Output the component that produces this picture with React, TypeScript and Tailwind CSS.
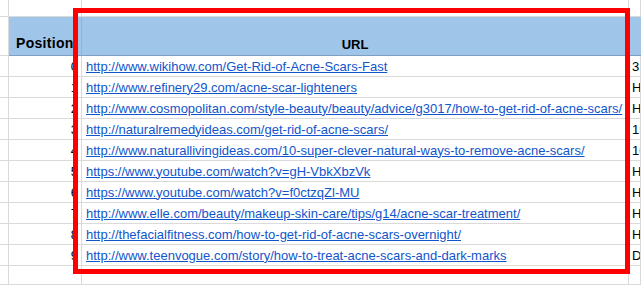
const rows = [
  { pos: "0", url: "http://www.wikihow.com/Get-Rid-of-Acne-Scars-Fast", extra: "3" },
  { pos: "1", url: "http://www.refinery29.com/acne-scar-lighteners", extra: "H" },
  { pos: "2", url: "http://www.cosmopolitan.com/style-beauty/beauty/advice/g3017/how-to-get-rid-of-acne-scars/", extra: "H" },
  { pos: "3", url: "http://naturalremedyideas.com/get-rid-of-acne-scars/", extra: "15" },
  { pos: "4", url: "http://www.naturallivingideas.com/10-super-clever-natural-ways-to-remove-acne-scars/", extra: "10" },
  { pos: "5", url: "https://www.youtube.com/watch?v=gH-VbkXbzVk", extra: "H" },
  { pos: "6", url: "https://www.youtube.com/watch?v=f0ctzqZl-MU", extra: "H" },
  { pos: "7", url: "http://www.elle.com/beauty/makeup-skin-care/tips/g14/acne-scar-treatment/", extra: "H" },
  { pos: "8", url: "http://thefacialfitness.com/how-to-get-rid-of-acne-scars-overnight/", extra: "H" },
  { pos: "9", url: "http://www.teenvogue.com/story/how-to-treat-acne-scars-and-dark-marks", extra: "D" },
];

const cell = "border-r border-b border-[#dadada] overflow-hidden whitespace-nowrap";

export default function App() {
  return (
    <div
      className="relative w-[641px] h-[285px] overflow-hidden bg-white text-[13px] text-black"
      style={{ fontFamily: '"Liberation Sans", Arial, sans-serif' }}
    >
      <div className="grid grid-cols-[9px_73px_547px_1fr] grid-rows-[17px_39px_repeat(10,21px)_1fr] h-full">
        {/* top blank row */}
        <div className={cell} />
        <div className={cell} />
        <div className={cell} />
        <div className={cell} />

        {/* header */}
        <div className={cell} />
        <div className="bg-[#9fc5e8] border-r border-b border-r-[#8fb3d6] border-b-[#7f9ec2] flex items-end pl-[7px] pb-[1px] text-[14px] tracking-[0.3px] font-bold overflow-hidden whitespace-nowrap">
          Position
        </div>
        <div className="bg-[#9fc5e8] border-r border-b border-r-[#8fb3d6] border-b-[#7f9ec2] flex items-end justify-center pb-[1px] font-bold">
          URL
        </div>
        <div className="bg-[#9fc5e8] border-b border-b-[#7f9ec2]" />

        {rows.map((r) => (
          <div key={r.pos} className="contents">
            <div className={cell} />
            <div className={`${cell} flex items-end justify-end pr-[3px]`}>{r.pos}</div>
            <div className={`${cell} flex items-end pl-[4px]`}>
              <span className="text-[#1155cc] underline">{r.url}</span>
            </div>
            <div className={`${cell} flex items-end pl-[3px]`}>{r.extra}</div>
          </div>
        ))}

        <div className={cell} />
        <div className={cell} />
        <div className={cell} />
        <div className={cell} />
      </div>

      {/* highlight annotation */}
      <div className="absolute left-[73px] top-[8px] w-[557px] h-[266px] border-[5px] border-[#ff0000] pointer-events-none" />
    </div>
  );
}
